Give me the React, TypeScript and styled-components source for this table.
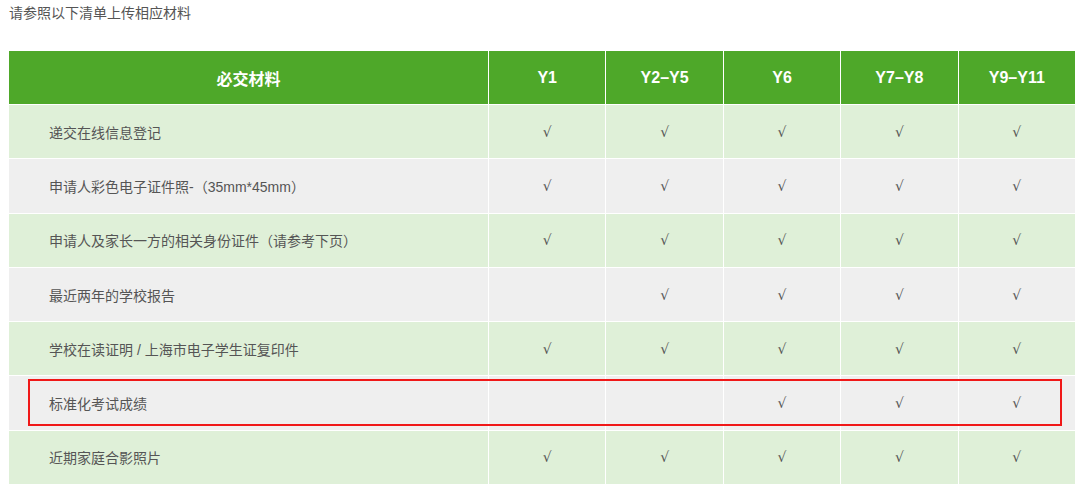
import React from "react";
import styled, { createGlobalStyle } from "styled-components";

const GlobalStyle = createGlobalStyle`
    body {
        margin: 0;
        background: #fff;
        font-family: "Liberation Sans", "Noto Sans CJK SC", sans-serif;
    }
`

const columns = ["Y1", "Y2–Y5", "Y6", "Y7–Y8", "Y9–Y11"]

type Item = { name: string; marks: boolean[]; highlight?: boolean }

const items: Item[] = [
    { name: "递交在线信息登记", marks: [true, true, true, true, true] },
    { name: "申请人彩色电子证件照-（35mm*45mm）", marks: [true, true, true, true, true] },
    { name: "申请人及家长一方的相关身份证件（请参考下页）", marks: [true, true, true, true, true] },
    { name: "最近两年的学校报告", marks: [false, true, true, true, true] },
    { name: "学校在读证明 / 上海市电子学生证复印件", marks: [true, true, true, true, true] },
    { name: "标准化考试成绩", marks: [false, false, true, true, true], highlight: true },
    { name: "近期家庭合影照片", marks: [true, true, true, true, true] },
]

const App = () => {
    return (
        <Page>
            <GlobalStyle />
            <Title>请参照以下清单上传相应材料</Title>
            <Table>
                <HeadRow>
                    <HeadCell>必交材料</HeadCell>
                    {columns.map(c => <HeadCell key={c}>{c}</HeadCell>)}
                </HeadRow>
                {items.map((item, i) => (
                    <Row key={item.name} $even={i % 2 === 1}>
                        <NameCell>{item.name}</NameCell>
                        {item.marks.map((m, j) => <MarkCell key={j}>{m ? "√" : ""}</MarkCell>)}
                        {item.highlight && <Highlight />}
                    </Row>
                ))}
            </Table>
        </Page>
    )
}

export default App

const Page = styled.div`
    padding: 3px 5px 0 9px;
`
const Title = styled.div`
    font-size: 14px;
    line-height: 20px;
    color: #555;
    margin-bottom: 28px;
`
const Table = styled.div`
    width: 1066px;
    display: flex;
    flex-direction: column;
    gap: 1px;
    background: #fff;
`
const HeadRow = styled.div`
    display: grid;
    grid-template-columns: 479px repeat(5, 1fr);
    column-gap: 1px;
    height: 53px;
`
const HeadCell = styled.div`
    background: #4ea829;
    color: #fff;
    font-size: 16px;
    font-weight: bold;
    display: flex;
    align-items: center;
    justify-content: center;
`
const Row = styled.div<{ $even: boolean }>`
    position: relative;
    display: grid;
    grid-template-columns: 479px repeat(5, 1fr);
    column-gap: 1px;
    height: 53.3px;
    & > div {
        background: ${p => p.$even ? "#efefef" : "#dff0d8"};
    }
`
const NameCell = styled.div`
    display: flex;
    align-items: center;
    padding-left: 40px;
    font-size: 14px;
    color: #555;
`
const MarkCell = styled.div`
    display: flex;
    align-items: center;
    justify-content: center;
    font-family: "DejaVu Serif", serif;
    font-size: 14px;
    color: #555;
`
const Highlight = styled.span`
    position: absolute;
    left: 19px;
    right: 13px;
    top: 3px;
    bottom: 4px;
    border: 2px solid #f01818;
    pointer-events: none;
`
